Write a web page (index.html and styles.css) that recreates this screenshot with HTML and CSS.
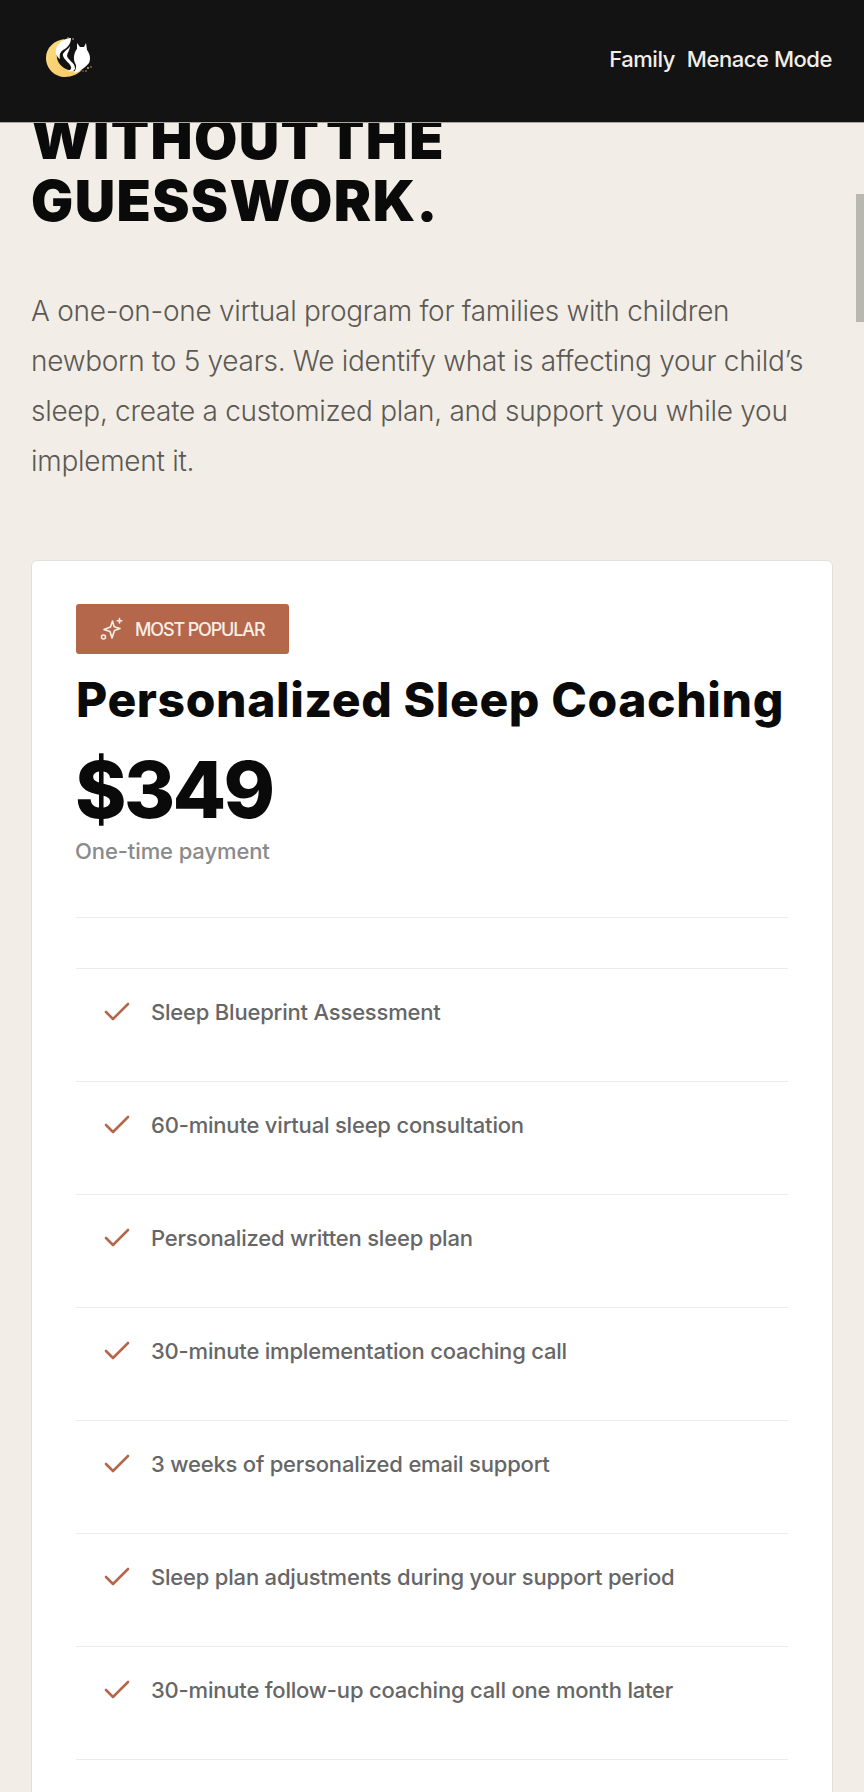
FILE: index.html
```html
<!DOCTYPE html>
<html lang="en">
<head>
<meta charset="UTF-8" />
<meta name="viewport" content="width=device-width, initial-scale=1" />
<title>Personalized Sleep Coaching</title>
<link rel="stylesheet" href="styles.css">
</head>
<body>

<header class="topbar">
  <svg class="logo" width="48" height="41" viewBox="0 0 48 41" aria-hidden="true">
    <defs>
      <linearGradient id="moon" x1="0" y1="0" x2="1" y2="1">
        <stop offset="0" stop-color="#fddc82" />
        <stop offset="1" stop-color="#f6c665" />
      </linearGradient>
    </defs>
    <path d="M20 2 C9 3 1 11 1 21 C1 32 10 40 20 40 C27 40 33 37 37 33 C31 35 24 34 19 31 C13 27 10 20 13 14 C15 9 17 4 20 2 Z" fill="url(#moon)" />
    <path d="M26 1 C19 1 13 6 11 12 C10 16 12 20 15 22 C14 18 15 15 18 13 C22 11 26 7 26 1 Z" fill="#fff" />
    <path d="M25 9 C23 13 17 15 18 19 C20 24 25 26 26 30 C27 32 24 34 22 34 C27 35 30 34 30 31 C30 26 23 23 22 19 C22 16 25 13 25 9 Z" fill="#fff" />
    <path d="M32 6 L35 10 L39 10 L41 6 L42 13 C45 17 46 22 44 26 C40 31 34 35 29 36 C31 32 32 29 30 26 C28 22 29 15 32 12 Z" fill="#fff" />
    <circle cx="23" cy="1" r=".7" fill="#f6c766" />
    <circle cx="28" cy="2" r=".8" fill="#f6c766" />
    <circle cx="43" cy="31" r=".9" fill="#f6c766" />
    <circle cx="46" cy="30" r=".7" fill="#f6c766" />
    <circle cx="41" cy="34" r=".7" fill="#f6c766" />
    <circle cx="38" cy="34" r=".6" fill="#f6c766" />
  </svg>
  <nav class="nav">
    <a href="#">Family</a>
    <a href="#">Menace Mode</a>
  </nav>
</header>

<div class="scrollthumb"></div>

<main class="page">
  <h1 class="headline">WITHOUT THE<br>GUESSWORK.</h1>
  <p class="lead">A one-on-one virtual program for families with children newborn to 5 years. We identify what is affecting your child’s sleep, create a customized plan, and support you while you implement it.</p>

  <section class="card">
    <div class="badge">
      <svg width="24" height="24" viewBox="0 0 24 24" fill="none" stroke="currentColor" stroke-width="1.6" stroke-linecap="round" stroke-linejoin="round" aria-hidden="true">
        <path d="M12.5 4 L14.2 9.8 L20 11.5 L14.5 13.5 L12 21 L10 14.5 L4 12.5 L10.5 10 Z" />
        <path d="M19.5 1.5 V6 M17.2 3.8 H21.8" />
        <circle cx="3.5" cy="20" r="2" />
      </svg>
      <span>MOST POPULAR</span>
    </div>
    <h2 class="plan">Personalized Sleep Coaching</h2>
    <div class="price">$349</div>
    <div class="once">One-time payment</div>

    <ul class="features">
      <li><svg class="check" width="26" height="20" viewBox="0 0 26 20" aria-hidden="true"><path d="M2 10 L9 17 L24 2" /></svg>Sleep Blueprint Assessment</li>
      <li><svg class="check" width="26" height="20" viewBox="0 0 26 20" aria-hidden="true"><path d="M2 10 L9 17 L24 2" /></svg>60-minute virtual sleep consultation</li>
      <li><svg class="check" width="26" height="20" viewBox="0 0 26 20" aria-hidden="true"><path d="M2 10 L9 17 L24 2" /></svg>Personalized written sleep plan</li>
      <li><svg class="check" width="26" height="20" viewBox="0 0 26 20" aria-hidden="true"><path d="M2 10 L9 17 L24 2" /></svg>30-minute implementation coaching call</li>
      <li><svg class="check" width="26" height="20" viewBox="0 0 26 20" aria-hidden="true"><path d="M2 10 L9 17 L24 2" /></svg>3 weeks of personalized email support</li>
      <li><svg class="check" width="26" height="20" viewBox="0 0 26 20" aria-hidden="true"><path d="M2 10 L9 17 L24 2" /></svg>Sleep plan adjustments during your support period</li>
      <li><svg class="check" width="26" height="20" viewBox="0 0 26 20" aria-hidden="true"><path d="M2 10 L9 17 L24 2" /></svg>30-minute follow-up coaching call one month later</li>
      <li></li>
    </ul>
  </section>
</main>

</body>
</html>
```

FILE: styles.css
```css
html, body {
  height: 100%;
  overflow: hidden;
}

body {
  margin: 0;
  background: #f2eee7;
  font-family: Inter, "Liberation Sans", sans-serif;
  color: #0a0a0a;
}

.topbar {
  position: fixed;
  top: 0;
  left: 0;
  right: 0;
  z-index: 10;
  height: 123px;
  box-sizing: border-box;
  padding: 0 32px 0 45px;
  display: flex;
  align-items: center;
  justify-content: space-between;
  background: #131313;
  border-bottom: 1px solid #a9a79f;
}

.logo {
  display: block;
  margin-bottom: 8px;
}

.nav {
  display: flex;
  gap: 12px;
  margin-bottom: 5px;
}

.nav a {
  color: #f2eee7;
  font-size: 22px;
  font-weight: 500;
  letter-spacing: -0.45px;
  text-decoration: none;
}

.scrollthumb {
  position: fixed;
  top: 194px;
  right: 0;
  width: 8px;
  height: 128px;
  background: #b9b7b0;
}

.page {
  height: 100vh;
  box-sizing: border-box;
  overflow: hidden;
  padding: 0 31px;
}

.headline {
  margin: 0;
  padding-top: 108px;
  font-size: 56px;
  line-height: 62px;
  font-weight: 900;
  letter-spacing: 1.4px;
  word-spacing: -7px;
}

.lead {
  margin: 54px 0 0;
  font-size: 28px;
  line-height: 50px;
  font-weight: 300;
  letter-spacing: -0.28px;
  color: #5c5954;
}

.card {
  margin-top: 74px;
  padding: 43px 44px 44px;
  background: #fff;
  border: 1px solid #e2e0dc;
  border-radius: 6px;
}

.badge {
  display: inline-flex;
  align-items: center;
  gap: 11px;
  height: 50px;
  box-sizing: border-box;
  padding: 0 25px 0 24px;
  background: #b5674c;
  border-radius: 3px;
  color: #f7efe6;
  font-size: 18px;
  font-weight: 500;
  letter-spacing: -1.15px;
}

.plan {
  margin: 16px 0 0;
  font-size: 48px;
  line-height: 60px;
  font-weight: 800;
  letter-spacing: 0.6px;
}

.price {
  margin: 16px 0 0 -1px;
  font-size: 78px;
  line-height: 88px;
  font-weight: 800;
  letter-spacing: -2.6px;
}

.once {
  margin: 2px 0 0 -1px;
  font-size: 22px;
  line-height: 30px;
  font-weight: 500;
  letter-spacing: -0.1px;
  color: #8a8a8a;
}

.features {
  list-style: none;
  margin: 51px 0 0;
  padding: 50px 0 0;
  border-top: 1px solid #ebebea;
}

.features li {
  display: flex;
  align-items: center;
  gap: 21px;
  height: 113px;
  box-sizing: border-box;
  padding: 0 0 26px 28px;
  border-top: 1px solid #ebebea;
  font-size: 22px;
  font-weight: 550;
  letter-spacing: -0.2px;
  color: #666;
}

.check {
  flex: none;
  fill: none;
  stroke: #b5674c;
  stroke-width: 2.6;
  stroke-linecap: round;
  stroke-linejoin: round;
}
```
